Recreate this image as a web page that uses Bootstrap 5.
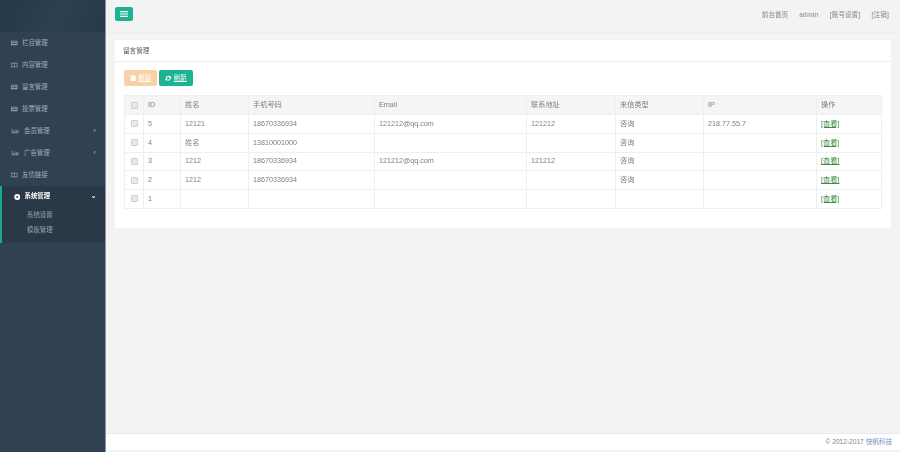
<!DOCTYPE html>
<html lang="zh"><head><meta charset="utf-8">
<link href="https://cdn.jsdelivr.net/npm/bootstrap@5.3.0/dist/css/bootstrap.min.css" rel="stylesheet">
<style>
html,body{height:100%;overflow:hidden}
body{font:7.2px/1.4 "Liberation Sans","Noto Sans CJK SC",sans-serif;color:#777a7c;background:#f3f3f4}
.shell{height:452px;opacity:.995}
.side{width:106px;background:#2f4050;border-right:1px solid #8a96a3;flex:none}
.logo{height:32px;background:linear-gradient(115deg,#243647 0,#293d4f 40%,#2b3f51 55%,#25384a 100%)}
.side-menu a{height:22px;color:#a0aabb;font-size:6.4px;text-decoration:none;padding-left:11px;padding-right:9px}
.side-menu svg{width:6.5px;height:6px;margin-right:4.5px;flex:none;fill:#8f9bb0}
.arrow{font-size:8px;line-height:1}
.sec{background:#293846;border-left:2px solid #19aa8d;height:57px}
.sec>a.head{color:#fff;font-weight:700;height:21.5px;padding-left:11.5px}
.sec>a.head svg{fill:#fff;margin-right:4.5px}
.side-menu .sec a.sub{height:15px;padding-left:25px;color:#98a3b5}
.topbar{height:33px;padding:7px 9px 0 9px;border-bottom:1px solid #ebedef}
.tog{width:18px;height:14px;background:#1ab394;border-radius:2px}
.toplinks{color:#a3a6a8;font-weight:700;font-size:6.6px;gap:11px;padding-top:3px;padding-right:3px}
.box{margin:7px 10px 0 9px;background:#fff}
.box-head{height:22px;border-bottom:1px solid #eee;padding-left:8px;color:#555;font-size:6.6px}
.box-body{padding:8px 9px 19px 9px}
.acts{column-gap:2px}
.act{height:16px;font-size:6.4px;line-height:1;padding:0;border-radius:2px;color:#fff;gap:2px;border:0;text-decoration:underline}
.act svg{width:6.500px;height:6.500px;fill:#fff;flex:none}
.act.del{width:33px;background:#f9d1a3}
.act.ref{width:34px;background:#1ab394}
.tbl{width:757px;table-layout:fixed;border-collapse:collapse;margin:9px 0 0;font-size:7.2px;color:#7b7e80}
.tbl th,.tbl td{border:1px solid #eeeff0;padding:0 4px;height:18.75px;vertical-align:middle;font-weight:400;white-space:nowrap;overflow:hidden}
.tbl th{background:#f5f5f6;height:19px}
.tbl a{color:#3d8a42}
.cb{display:block;width:7px;height:7px;margin:0 auto;border:1px solid #cfcfcf;border-radius:1px;background:#e9e9e9}
.foot{height:17px;margin-top:auto;margin-bottom:2px;background:#fff;border-top:1px solid #e7eaec;padding-right:9px;color:#808385;font-size:6.6px}
.foot span{color:#6d94bd}
</style></head><body>
<div class="shell d-flex">
<nav class="side d-flex flex-column">
<div class="logo"></div>
<div class="side-menu">
<a class="d-flex align-items-center" href="#"><svg viewBox="0 0 9 8"><path d="M0 1h9v6H0zM1 2v1h7V2zm0 2v1h7V4z"/></svg>栏目管理</a>
<a class="d-flex align-items-center" href="#"><svg viewBox="0 0 9 8"><path d="M0 1h9v6H0zM1 2v4h3V2zm4 0v4h3V2z"/></svg>内容管理</a>
<a class="d-flex align-items-center" href="#"><svg viewBox="0 0 9 8"><path d="M0 1h9v6H0zM1 2v1h7V2zm0 2v1h7V4z"/></svg>留言管理</a>
<a class="d-flex align-items-center" href="#"><svg viewBox="0 0 9 8"><path d="M0 1h9v6H0zM1 2v1h7V2zm0 2v1h7V4z"/></svg>投票管理</a>
<a class="d-flex align-items-center" href="#"><svg viewBox="0 0 9 8" style="width:8px;margin-right:5px"><path d="M0 1h1v5h8v1H0zM2 4h1v2H2zm2-2h1v4H4zm2 1h1v3H6zm2-1h1v4H8z"/></svg>会员管理<span class="arrow ms-auto">‹</span></a>
<a class="d-flex align-items-center" href="#"><svg viewBox="0 0 9 8" style="width:8px;margin-right:5px"><path d="M0 1h1v5h8v1H0zM2 4h1v2H2zm2-2h1v4H4zm2 1h1v3H6zm2-1h1v4H8z"/></svg>广告管理<span class="arrow ms-auto">‹</span></a>
<a class="d-flex align-items-center" href="#"><svg viewBox="0 0 9 8"><path d="M0 1h9v6H0zM1 2v4h3V2zm4 0v4h3V2z"/></svg>友情链接</a>
<div class="sec">
<a class="head d-flex align-items-center" href="#"><svg viewBox="0 0 8 8"><path fill-rule="evenodd" d="M4 0a4 4 0 1 1 0 8 4 4 0 0 1 0-8zm0 2.700a1.300 1.300 0 1 0 0 2.600 1.300 1.300 0 0 0 0-2.600z"/></svg>系统管理<span class="arrow ms-auto" style="transform:rotate(-90deg)">‹</span></a>
<a class="sub d-flex align-items-center" href="#">系统设置</a>
<a class="sub d-flex align-items-center" href="#">模板管理</a>
</div>
</div>
</nav>
<main class="flex-grow-1 d-flex flex-column">
<div class="topbar d-flex justify-content-between">
<div class="tog d-flex align-items-center justify-content-center"><svg width="8" height="6" viewBox="0 0 8 6" fill="#fff"><path d="M0 0h8v1.200H0zM0 2.400h8v1.200H0zM0 4.800h8V6H0z"/></svg></div>
<div class="toplinks d-flex"><span>前台首页</span><span>admin</span><span>[账号设置]</span><span>[注销]</span></div>
</div>
<section class="box">
<div class="box-head d-flex align-items-center">留言管理</div>
<div class="box-body">
<div class="acts d-flex">
<button class="act del btn d-flex align-items-center justify-content-center"><svg viewBox="0 0 8 8"><path d="M1 2h6v6H1zM0 1h8v.7H0zM3 0h2v1H3z"/></svg>删除</button>
<button class="act ref btn d-flex align-items-center justify-content-center"><svg viewBox="0 0 8 8"><path d="M4 1a3 3 0 0 1 2.400 1.200L7.500 1v3h-3l1.100-1.100A2 2 0 0 0 2 4H1a3 3 0 0 1 3-3zM7 4a3 3 0 0 1-5.400 1.800L.5 7V4h3L2.400 5.100A2 2 0 0 0 6 4z"/></svg>刷新</button>
</div>
<table class="tbl">
<colgroup><col style="width:19px"><col style="width:37px"><col style="width:68px"><col style="width:126px"><col style="width:152px"><col style="width:89px"><col style="width:88px"><col style="width:113px"><col style="width:65px"></colgroup>
<thead><tr><th><i class="cb"></i></th><th>ID</th><th>姓名</th><th>手机号码</th><th>Email</th><th>联系地址</th><th>来信类型</th><th>IP</th><th>操作</th></tr></thead>
<tbody>
<tr><td><i class="cb"></i></td><td>5</td><td>12121</td><td>18670336934</td><td>121212@qq.com</td><td>121212</td><td>咨询</td><td>218.77.55.7</td><td><a href="#">[查看]</a></td></tr>
<tr><td><i class="cb"></i></td><td>4</td><td>姓名</td><td>13810001000</td><td></td><td></td><td>咨询</td><td></td><td><a href="#">[查看]</a></td></tr>
<tr><td><i class="cb"></i></td><td>3</td><td>1212</td><td>18670336934</td><td>121212@qq.com</td><td>121212</td><td>咨询</td><td></td><td><a href="#">[查看]</a></td></tr>
<tr><td><i class="cb"></i></td><td>2</td><td>1212</td><td>18670336934</td><td></td><td></td><td>咨询</td><td></td><td><a href="#">[查看]</a></td></tr>
<tr><td><i class="cb"></i></td><td>1</td><td></td><td></td><td></td><td></td><td></td><td></td><td><a href="#">[查看]</a></td></tr>
</tbody></table>
</div>
</section>
<footer class="foot d-flex align-items-center justify-content-end">© 2012-2017&nbsp;<span>快帆科技</span></footer>
</main>
</div>
</body></html>
